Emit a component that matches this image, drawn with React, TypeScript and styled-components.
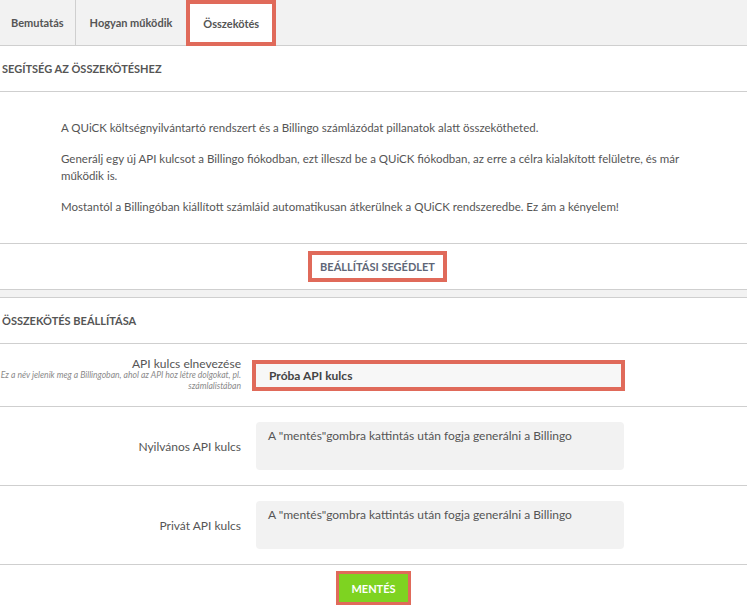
import React from 'react'
import styled, { createGlobalStyle } from 'styled-components'

const GlobalStyle = createGlobalStyle`
  html, body {
    margin: 0;
    padding: 0;
    background: #fff;
  }
  body {
    font-family: Lato, "Noto Sans", sans-serif;
    color: #555;
  }
`

const RED = '#e06a5a'
const LINE = '#cfcfcf'

const Page = styled.div`
  width: 747px;
  height: 608px;
  overflow: hidden;
`

const TabBar = styled.div`
  display: flex;
  height: 45px;
  background: #f2f2f2;
  border-bottom: 1px solid ${LINE};
`

const Tab = styled.div<{ $pad: number; $sep?: boolean; $active?: boolean }>`
  display: flex;
  align-items: center;
  padding: 0 ${p => p.$pad}px;
  font-size: 11px;
  font-weight: 700;
  color: #555;
  border-right: ${p => (p.$sep ? `1px solid ${LINE}` : 'none')};
  ${p =>
    p.$active &&
    `
    background: #fff;
    border: 4px solid ${RED};
    height: 46px;
    box-sizing: border-box;
    margin-bottom: -1px;
    position: relative;
  `}
`

const SectionTitle = styled.div`
  height: 45px;
  display: flex;
  align-items: center;
  padding-left: 2px;
  font-size: 11px;
  font-weight: 700;
  color: #555;
  border-bottom: 1px solid ${LINE};
`

const Intro = styled.div`
  padding: 27px 60px 28px 61px;
  border-bottom: 1px solid ${LINE};
`

const Para = styled.p`
  margin: 0 0 14px;
  font-size: 11.5px;
  line-height: 17px;
  color: #555;
  &:last-child {
    margin-bottom: 0;
  }
`

const ButtonRow = styled.div`
  height: 45px;
  display: flex;
  align-items: center;
  justify-content: center;
  padding-left: 8px;
`

const GuideButton = styled.button`
  height: 31px;
  padding: 0 8px;
  background: #fff;
  border: 4px solid ${RED};
  font-family: inherit;
  font-size: 11px;
  font-weight: 700;
  color: #5e6677;
  cursor: pointer;
`

const Gap = styled.div`
  height: 7px;
  background: #f2f2f2;
  border-top: 1px solid ${LINE};
  border-bottom: 1px solid ${LINE};
`

const FormRow = styled.div<{ $center?: boolean; $pad: string }>`
  display: grid;
  grid-template-columns: 241px 368px;
  column-gap: 15px;
  align-items: ${p => (p.$center ? 'center' : 'start')};
  padding: ${p => p.$pad};
  border-bottom: 1px solid ${LINE};
`

const LabelCol = styled.div`
  text-align: right;
`

const Label = styled.div`
  font-size: 12px;
  line-height: 13px;
  color: #555;
`

const Hint = styled.div`
  font-size: 8.6px;
  line-height: 11px;
  font-style: italic;
  color: #8a8a8a;
`

const NameInput = styled.input`
  box-sizing: border-box;
  width: 365px;
  height: 23px;
  margin-top: 7px;
  padding: 0 13px;
  border: none;
  outline: 4px solid ${RED};
  background: #f7f7f7;
  font-family: inherit;
  font-size: 12px;
  font-weight: 700;
  color: #444;
`

const KeyBox = styled.div`
  box-sizing: border-box;
  height: 48px;
  padding: 6px 12px;
  background: #f2f2f2;
  border-radius: 4px;
  font-size: 12px;
  line-height: 16px;
  color: #555;
`

const Footer = styled.div`
  display: flex;
  justify-content: center;
  padding-top: 6px;
`

const SaveButton = styled.button`
  height: 34px;
  padding: 0 12px;
  background: #7ed321;
  border: 3px solid ${RED};
  font-family: inherit;
  font-size: 11px;
  font-weight: 700;
  color: #fff;
  cursor: pointer;
`

const placeholder = 'A "mentés"gombra kattintás után fogja generálni a Billingo'

const App = () => {
  return (
    <Page>
      <GlobalStyle />
      <TabBar>
        <Tab $pad={11} $sep>Bemutatás</Tab>
        <Tab $pad={14}>Hogyan működik</Tab>
        <Tab $pad={13} $active>Összekötés</Tab>
      </TabBar>

      <SectionTitle>SEGÍTSÉG AZ ÖSSZEKÖTÉSHEZ</SectionTitle>
      <Intro>
        <Para>A QUiCK költségnyilvántartó rendszert és a Billingo számlázódat pillanatok alatt összekötheted.</Para>
        <Para>
          Generálj egy új API kulcsot a Billingo fiókodban, ezt illeszd be a QUiCK fiókodban, az erre a célra
          kialakított felületre, és már működik is.
        </Para>
        <Para>
          Mostantól a Billingóban kiállított számláid automatikusan átkerülnek a QUiCK rendszeredbe. Ez ám a
          kényelem!
        </Para>
      </Intro>
      <ButtonRow>
        <GuideButton>BEÁLLÍTÁSI SEGÉDLET</GuideButton>
      </ButtonRow>
      <Gap />

      <SectionTitle>ÖSSZEKÖTÉS BEÁLLÍTÁSA</SectionTitle>
      <FormRow $pad="13px 0 14px">
        <LabelCol>
          <Label>API kulcs elnevezése</Label>
          <Hint>
            Ez a név jelenik meg a Billingoban, ahol az API hoz létre dolgokat, pl.
            <br />
            számlalistában
          </Hint>
        </LabelCol>
        <NameInput defaultValue="Próba API kulcs" />
      </FormRow>
      <FormRow $pad="15px 0" $center>
        <LabelCol>
          <Label>Nyilvános API kulcs</Label>
        </LabelCol>
        <KeyBox>{placeholder}</KeyBox>
      </FormRow>
      <FormRow $pad="15px 0" $center>
        <LabelCol>
          <Label>Privát API kulcs</Label>
        </LabelCol>
        <KeyBox>{placeholder}</KeyBox>
      </FormRow>
      <Footer>
        <SaveButton>MENTÉS</SaveButton>
      </Footer>
    </Page>
  )
}

export default App
